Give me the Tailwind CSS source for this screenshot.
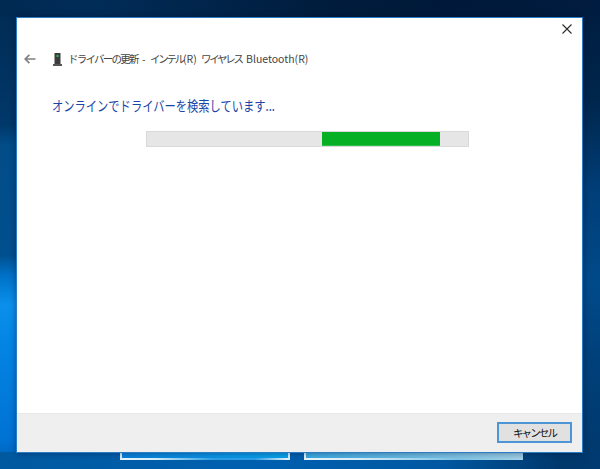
<!DOCTYPE html>
<html lang="ja">
<head>
    <meta charset="UTF-8">
    <title>ドライバーの更新</title>
    <script src="https://cdn.jsdelivr.net/npm/@tailwindcss/browser@4"></script>
</head>
<body class="m-0 bg-[#003a70]">
    <div class="relative w-[600px] h-[469px] overflow-hidden font-['Noto_Sans_CJK_JP','Noto_Sans',sans-serif] bg-[linear-gradient(180deg,#00203f_0px,#002b54_120px,#004a86_300px,#004f92_450px,#003a70_469px)]">
        <!-- wallpaper -->
        <div class="absolute inset-y-0 left-0 w-[16px] bg-[linear-gradient(180deg,#012a52_0px,#01386a_125px,#024c88_145px,#014f8e_255px,#0070c6_275px,#0a90ec_305px,#0384e4_345px,#0072d4_440px,#0068c0_453px,#01599f_456px,#014f90_469px)]"></div>
        <div class="absolute inset-x-0 top-0 h-[17px] bg-[linear-gradient(90deg,#012a52_0px,#012c58_90px,#001c3c_330px,#00193a_450px,#001c3f_600px)]"></div>
        <div class="absolute right-0 inset-y-0 w-[17px] bg-[linear-gradient(180deg,#001c3f_0px,#00264c_100px,#003e78_190px,#004a8a_285px,#00407a_360px,#00386c_469px)]"></div>
        <div class="absolute inset-x-0 bottom-0 h-[17px] bg-[linear-gradient(90deg,#01599f_0px,#0060b0_250px,#0058a2_440px,#00386c_560px,#003a70_600px)]"></div>
        <!-- taskbar tiles behind the window -->
        <div class="absolute left-[120px] top-[450px] w-[170px] h-[10px] border-x-2 border-[#d8f0fb] bg-[linear-gradient(90deg,#0a80d8,#0aa0ea)] flex items-end">
            <div class="w-full h-[2px] bg-[linear-gradient(90deg,#e8f6fc_0%,#d8f0fb_20%,#2a9ee6_55%,#2a9ee6_80%,#e8f6fc_100%)]"></div>
        </div>
        <div class="absolute left-[304px] top-[450px] w-[219px] h-[10px] border-l-2 border-[#e2f3fa] bg-[linear-gradient(90deg,#3ba8de,#9accE4)] flex items-end">
            <div class="w-full h-[2px] bg-[linear-gradient(90deg,#e8f6fc_0%,#d8eefa_25%,#7cc4e8_70%,#a6d2e6_100%)]"></div>
        </div>

        <!-- dialog -->
        <div class="absolute left-[16px] top-[17px] w-[567px] h-[436px] border border-[#2a7cc4] bg-white flex flex-col shadow-[0_0_6px_rgba(0,20,50,0.45)]">
            <div class="flex justify-end h-[23px] pt-[6px] pr-[10px]">
                <svg class="w-[10px] h-[10px]" viewBox="0 0 10 10" fill="none" stroke="#2a2a2a" stroke-width="1.1">
                    <path d="M0.5 0.5L9.5 9.5M9.5 0.5L0.5 9.5" />
                </svg>
            </div>
            <div class="flex items-center h-[14px] mt-[11px] pl-[7px]">
                <svg class="w-[12px] h-[10px]" viewBox="0 0 12 10" fill="none" stroke="#808080" stroke-width="1.7">
                    <path d="M11.5 5H1.5M5.4 0.8L1.2 5L5.4 9.2" />
                </svg>
                <svg class="w-[9px] h-[13px] ml-[17px]" viewBox="0 0 9 13">
                    <rect x="1.5" y="0" width="6" height="11" fill="#3c3c3c" />
                    <rect x="3.5" y="2" width="2" height="2" fill="#28c050" />
                    <rect x="0" y="11" width="9" height="2" fill="#555555" />
                </svg>
                <div class="ml-[6px] flex text-[10.5px] leading-[14px] text-[#444444] whitespace-nowrap">
                    <span class="w-[74px] tracking-[-1.75px]">ドライバーの更新</span>
                    <span class="w-[8px]">-</span>
                    <span class="w-[33px] tracking-[-2.25px]">インテル</span>
                    <span class="w-[18px]">(R)</span>
                    <span class="w-[45px] tracking-[-2.3px]">ワイヤレス</span>
                    <span>Bluetooth(R)</span>
                </div>
            </div>
            <h1 class="ml-[35px] mt-[29px] origin-left scale-x-[0.805] text-[14px] leading-[20px] font-normal text-[#1a45a8] whitespace-nowrap">オンラインでドライバーを検索しています...</h1>
            <div class="ml-[129px] mt-[16px] w-[323px] h-[16px] border border-[#d9d9d9] bg-[#e6e6e6] pl-[175px]">
                <div class="w-[118px] h-full bg-[#06b025] border-b border-[#2cc04a]"></div>
            </div>
            <div class="flex-1"></div>
            <div class="h-[39px] bg-[#efefef] border-t border-[#e9e9e9] flex justify-end items-start pt-[8px] pr-[10px]">
                <button class="w-[75px] h-[21px] border-2 border-[#4e95d6] bg-[#e1e1e1] text-[10.5px] leading-[15px] tracking-[-1.9px] text-[#111111] flex items-center justify-center">キャンセル</button>
            </div>
        </div>
    </div>
</body>
</html>
